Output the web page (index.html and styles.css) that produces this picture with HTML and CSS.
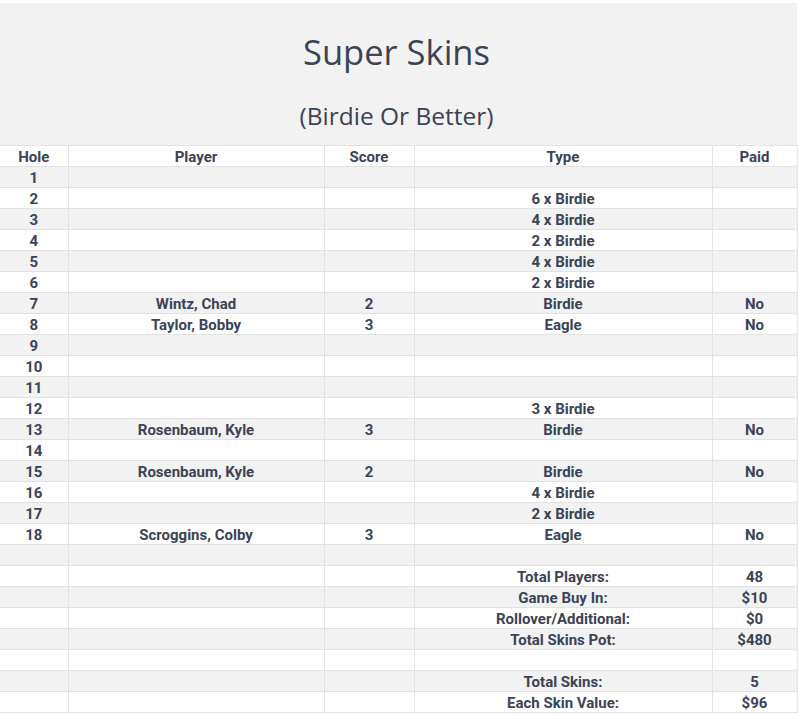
FILE: index.html
```html
<!DOCTYPE html>
<html>
<head>
<meta charset="utf-8">
<link rel="stylesheet" href="styles.css">
</head>
<body>
<div class="page">
  <header class="banner">
    <h1 class="title">Super Skins</h1>
    <h2 class="subtitle">(Birdie Or Better)</h2>
  </header>
  <table class="skins">
    <colgroup>
      <col class="c-hole"><col class="c-player"><col class="c-score"><col class="c-type"><col class="c-paid">
    </colgroup>
    <thead>
      <tr><th>Hole</th><th>Player</th><th>Score</th><th>Type</th><th>Paid</th></tr>
    </thead>
    <tbody>
      <tr><td>1</td><td></td><td></td><td></td><td></td></tr>
      <tr><td>2</td><td></td><td></td><td>6 x Birdie</td><td></td></tr>
      <tr><td>3</td><td></td><td></td><td>4 x Birdie</td><td></td></tr>
      <tr><td>4</td><td></td><td></td><td>2 x Birdie</td><td></td></tr>
      <tr><td>5</td><td></td><td></td><td>4 x Birdie</td><td></td></tr>
      <tr><td>6</td><td></td><td></td><td>2 x Birdie</td><td></td></tr>
      <tr><td>7</td><td>Wintz, Chad</td><td>2</td><td>Birdie</td><td>No</td></tr>
      <tr><td>8</td><td>Taylor, Bobby</td><td>3</td><td>Eagle</td><td>No</td></tr>
      <tr><td>9</td><td></td><td></td><td></td><td></td></tr>
      <tr><td>10</td><td></td><td></td><td></td><td></td></tr>
      <tr><td>11</td><td></td><td></td><td></td><td></td></tr>
      <tr><td>12</td><td></td><td></td><td>3 x Birdie</td><td></td></tr>
      <tr><td>13</td><td>Rosenbaum, Kyle</td><td>3</td><td>Birdie</td><td>No</td></tr>
      <tr><td>14</td><td></td><td></td><td></td><td></td></tr>
      <tr><td>15</td><td>Rosenbaum, Kyle</td><td>2</td><td>Birdie</td><td>No</td></tr>
      <tr><td>16</td><td></td><td></td><td>4 x Birdie</td><td></td></tr>
      <tr><td>17</td><td></td><td></td><td>2 x Birdie</td><td></td></tr>
      <tr><td>18</td><td>Scroggins, Colby</td><td>3</td><td>Eagle</td><td>No</td></tr>
      <tr><td></td><td></td><td></td><td></td><td></td></tr>
      <tr><td></td><td></td><td></td><td>Total Players:</td><td>48</td></tr>
      <tr><td></td><td></td><td></td><td>Game Buy In:</td><td>$10</td></tr>
      <tr><td></td><td></td><td></td><td>Rollover/Additional:</td><td>$0</td></tr>
      <tr><td></td><td></td><td></td><td>Total Skins Pot:</td><td>$480</td></tr>
      <tr><td></td><td></td><td></td><td></td><td></td></tr>
      <tr><td></td><td></td><td></td><td>Total Skins:</td><td>5</td></tr>
      <tr><td></td><td></td><td></td><td>Each Skin Value:</td><td>$96</td></tr>
    </tbody>
  </table>
</div>
</body>
</html>
```
FILE: styles.css
```css
html, body {
  margin: 0;
  padding: 0;
  background: #ffffff;
}
.page {
  padding-top: 3px;
  width: 797px;
}
.banner {
  background: #f2f2f2;
  height: 142px;
  box-sizing: border-box;
  padding: 27px 4px 0 0;
  text-align: center;
  color: #3b4356;
  font-family: "Open Sans", sans-serif;
}
.title {
  margin: 0;
  font-size: 34.5px;
  line-height: 44px;
  font-weight: 400;
}
.subtitle {
  margin: 27px 0 0;
  font-size: 24.5px;
  line-height: 30px;
  font-weight: 400;
}
.skins {
  width: 797px;
  border-collapse: collapse;
  table-layout: fixed;
  font-family: Roboto, "Liberation Sans", sans-serif;
  font-weight: 700;
  font-size: 15px;
  color: #3b4356;
}
.c-hole { width: 68px; }
.c-player { width: 256px; }
.c-score { width: 90px; }
.c-type { width: 298px; }
.c-paid { width: 85px; }
.skins th, .skins td {
  border: 1px solid #e2e2e2;
  height: 18px;
  padding: 2px 0 0;
  line-height: 18px;
  text-align: center;
  font-weight: 700;
}
.skins th:first-child, .skins td:first-child {
  border-left: none;
}
.skins tbody tr:nth-child(odd) {
  background: #f2f2f2;
}
```
